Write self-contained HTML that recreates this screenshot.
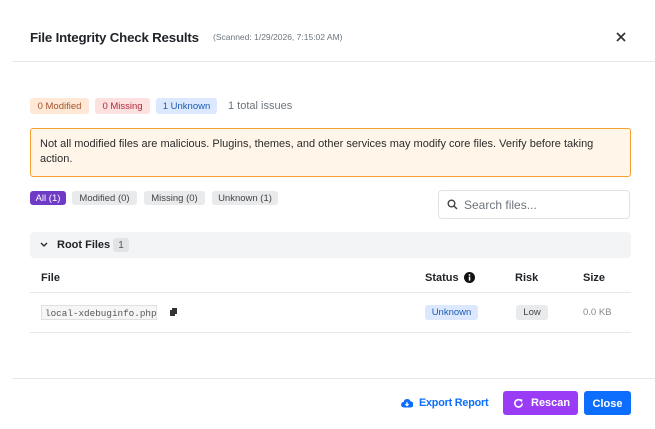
<!DOCTYPE html>
<html><head><meta charset="utf-8"><style>
*{box-sizing:border-box;margin:0;padding:0}
body{width:655px;height:429px;background:#fff;font-family:"Liberation Sans",Arial,sans-serif;color:#212529;position:relative;overflow:hidden}
.a{position:absolute;white-space:nowrap}
.b{position:absolute;font-size:9.5px;border-radius:3px;display:flex;align-items:center;justify-content:center;white-space:nowrap}
.hr{position:absolute;height:1px;background:#e5e7eb}
</style></head><body>
<div class="a" style="left:30px;top:30px;font-size:13.3px;font-weight:bold;color:#1f2328;letter-spacing:-0.2px">File Integrity Check Results</div>
<div class="a" style="left:213px;top:32px;font-size:8.5px;color:#6c757d">(Scanned: 1/29/2026, 7:15:02 AM)</div>
<svg class="a" style="left:616px;top:32px" width="10" height="10" viewBox="0 0 10 10"><path d="M1 1L9 9M9 1L1 9" stroke="#333" stroke-width="1.7"/></svg>
<div class="hr" style="left:12px;top:61px;width:643px"></div>

<div class="b" style="left:30px;top:98px;width:59px;height:16px;background:#ffe9d6;color:#a0522d">0 Modified</div>
<div class="b" style="left:95px;top:98px;width:55px;height:16px;background:#fde0e0;color:#b02a37">0 Missing</div>
<div class="b" style="left:156px;top:98px;width:61px;height:16px;background:#dbe8fd;color:#1e5bb5">1 Unknown</div>
<div class="a" style="left:228px;top:100px;font-size:11px;color:#6c757d">1 total issues</div>

<div class="a" style="left:30px;top:128px;width:601px;height:49px;border:1px solid #f5a030;background:#fff6e9;border-radius:3px;font-size:11px;line-height:14.5px;padding:8px 9px;white-space:normal;color:#2b2b2b">Not all modified files are malicious. Plugins, themes, and other services may modify core files. Verify before taking action.</div>

<div class="b" style="left:30px;top:191px;width:36px;height:14px;background:#6f3bc6;color:#fff">All (1)</div>
<div class="b" style="left:72px;top:191px;width:65px;height:14px;background:#e9eaec;color:#444">Modified (0)</div>
<div class="b" style="left:144px;top:191px;width:61px;height:14px;background:#e9eaec;color:#444">Missing (0)</div>
<div class="b" style="left:212px;top:191px;width:66px;height:14px;background:#e9eaec;color:#444">Unknown (1)</div>

<div class="a" style="left:438px;top:190px;width:192px;height:29px;border:1px solid #dee2e6;border-radius:4px"></div>
<svg class="a" style="left:447px;top:199px" width="11" height="11" viewBox="0 0 11 11"><circle cx="4.5" cy="4.5" r="3.3" fill="none" stroke="#444" stroke-width="1.4"/><path d="M7 7L10 10" stroke="#444" stroke-width="1.5"/></svg>
<div class="a" style="left:464px;top:198px;font-size:12px;color:#6c757d">Search files...</div>

<div class="a" style="left:30px;top:232px;width:601px;height:26px;background:#f3f4f5;border-radius:4px"></div>
<svg class="a" style="left:40px;top:242px" width="8" height="6" viewBox="0 0 8 6"><path d="M1 1L4 4L7 1" fill="none" stroke="#222" stroke-width="1.3"/></svg>
<div class="a" style="left:57px;top:239px;font-size:11px;font-weight:bold">Root Files</div>
<div class="b" style="left:113px;top:238px;width:16px;height:14px;background:#e2e3e5;color:#555;font-size:10px">1</div>

<div class="a" style="left:41px;top:272px;font-size:11px;font-weight:bold">File</div>
<div class="a" style="left:425px;top:272px;font-size:11px;font-weight:bold">Status</div>
<svg class="a" style="left:464px;top:272px" width="11" height="11" viewBox="0 0 11 11"><circle cx="5.5" cy="5.5" r="5.5" fill="#111"/><rect x="4.8" y="4.6" width="1.5" height="4" fill="#fff"/><circle cx="5.5" cy="3" r=".9" fill="#fff"/></svg>
<div class="a" style="left:515px;top:272px;font-size:11px;font-weight:bold">Risk</div>
<div class="a" style="left:583px;top:272px;font-size:11px;font-weight:bold">Size</div>
<div class="hr" style="left:30px;top:292px;width:601px"></div>

<div class="a" style="left:41px;top:305px;width:116px;height:15px;background:#f6f6f6;border:1px solid #e0e0e0;font-family:'Liberation Mono',monospace;font-size:9.3px;color:#555;padding:2px 3px">local-xdebuginfo.php</div>
<svg class="a" style="left:170px;top:308px" width="7" height="8" viewBox="0 0 7 8"><rect x="0" y="2" width="5" height="6" fill="#333"/><rect x="2" y="0" width="5" height="6" fill="#333"/></svg>
<div class="b" style="left:425px;top:305px;width:53px;height:15px;background:#dbe8fd;color:#1e5bb5">Unknown</div>
<div class="b" style="left:516px;top:305px;width:32px;height:15px;background:#e9eaec;color:#444">Low</div>
<div class="a" style="left:583px;top:307px;font-size:9.5px;color:#888">0.0 KB</div>
<div class="hr" style="left:30px;top:332px;width:601px"></div>

<div class="hr" style="left:12px;top:378px;width:643px"></div>
<svg class="a" style="left:401px;top:398px" width="12" height="10" viewBox="0 0 12 10"><path d="M3 9.5a2.8 2.8 0 0 1-.3-5.6A3.6 3.6 0 0 1 9.6 3.4a3 3 0 0 1-.3 6.1z" fill="#0d6efd"/><path d="M6 4v3.5M4.4 6L6 7.6 7.6 6" stroke="#fff" stroke-width="1.2" fill="none"/></svg>
<div class="a" style="left:419px;top:397px;font-size:10.8px;font-weight:bold;color:#0d6efd;letter-spacing:-0.2px">Export Report</div>
<div class="a" style="left:503px;top:391px;width:75px;height:24px;background:#9a3cf5;border-radius:3px"></div>
<svg class="a" style="left:513px;top:398px" width="11" height="11" viewBox="0 0 11 11"><path d="M9.2 5.5A3.7 3.7 0 1 1 8 2.6" fill="none" stroke="#fff" stroke-width="1.6"/><path d="M6.3 1.2L9.4 1.4 9 4.6z" fill="#fff"/></svg>
<div class="a" style="left:531px;top:397px;font-size:11px;font-weight:bold;color:#fff">Rescan</div>
<div class="a" style="left:584px;top:391px;width:47px;height:24px;background:#0d6efd;border-radius:3px;color:#fff;font-size:11px;font-weight:bold;display:flex;align-items:center;justify-content:center;padding-top:1px">Close</div>
</body></html>
